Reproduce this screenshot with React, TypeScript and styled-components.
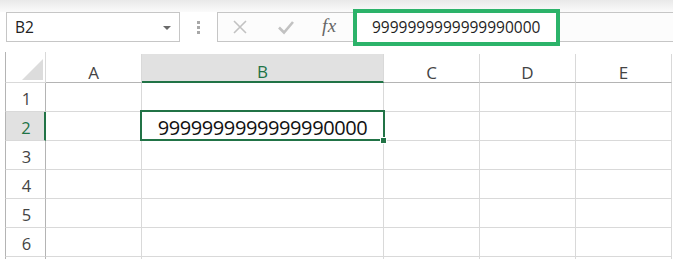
import React from 'react';
import styled, { createGlobalStyle } from 'styled-components';

const GlobalStyle = createGlobalStyle`
  html, body {
    margin: 0;
    padding: 0;
    background: #ffffff;
  }
  body {
    font-family: 'Open Sans', 'Noto Sans', sans-serif;
    color: #222;
  }
`;

const GREEN = '#217346';
const GRID = '#d9d9d9';
const HEADER_EDGE = '#b4b4b4';

const Page = styled.div`
  width: 673px;
  height: 259px;
  overflow: hidden;
  background: #fff;
`;

const TopBand = styled.div`
  height: 12px;
  background: linear-gradient(#e9e9e9, #fbfbfb);
`;

const Toolbar = styled.div`
  display: flex;
  align-items: stretch;
  height: 30px;
  padding-left: 6px;
`;

const NameBox = styled.div`
  box-sizing: border-box;
  width: 174px;
  display: flex;
  align-items: center;
  justify-content: space-between;
  padding: 0 8px 0 8px;
  border: 1px solid #c6c6c6;
  background: #fff;
  font-size: 15.5px;
  color: #222;
`;

const Caret = styled.span`
  width: 0;
  height: 0;
  border-left: 4px solid transparent;
  border-right: 4px solid transparent;
  border-top: 4px solid #6a6a6a;
  margin-top: 2px;
`;

const Grip = styled.div`
  width: 37px;
  display: flex;
  flex-direction: column;
  align-items: center;
  justify-content: center;
  gap: 2px;
  padding-top: 1px;

  span {
    width: 3px;
    height: 3px;
    background: #a8a8a8;
  }
`;

const FormulaBar = styled.div`
  flex: 1;
  display: flex;
  align-items: center;
  box-sizing: border-box;
  border: 1px solid #c6c6c6;
  border-right: none;
  background: #fcfcfc;
`;

const Buttons = styled.div`
  box-sizing: border-box;
  width: 135px;
  flex: none;
  display: flex;
  align-items: center;
  padding-left: 14px;
`;

const IconSlot = styled.div<{ $w: number }>`
  width: ${(p) => p.$w}px;
  display: flex;
  align-items: center;
  justify-content: flex-start;
`;

const Fx = styled.span`
  font-family: 'Liberation Serif', 'DejaVu Serif', serif;
  font-style: italic;
  font-size: 19px;
  color: #666;
  letter-spacing: 0.5px;
  margin-top: -2px;
`;

const Highlight = styled.div`
  box-sizing: border-box;
  width: 207px;
  height: 37px;
  flex: none;
  display: flex;
  align-items: center;
  padding-left: 15px;
  border: 4px solid #2cb36a;
  background: #fff;
  font-size: 15.5px;
  color: #1e1e1e;
`;

const Sheet = styled.div`
  margin-top: 10px;
  margin-left: 5px;
  display: grid;
  grid-template-columns: 41px 96px 242px 96px 96px 96px;
  grid-auto-rows: 29px;
  grid-template-rows: 31px;
`;

const Corner = styled.div`
  box-sizing: border-box;
  border-left: 1px solid ${HEADER_EDGE};
  border-right: 1px solid ${GRID};
  border-bottom: 1px solid ${GRID};
  display: flex;
  align-items: flex-end;
  justify-content: flex-end;
  padding: 0 2px 2px 0;
`;

const CornerMark = styled.span`
  width: 0;
  height: 0;
  border-left: 21px solid transparent;
  border-bottom: 21px solid #dcdcdc;
`;

const ColHead = styled.div<{ $active?: boolean }>`
  box-sizing: border-box;
  display: flex;
  align-items: center;
  justify-content: center;
  padding-top: 8px;
  font-size: 17px;
  color: ${(p) => (p.$active ? GREEN : '#444')};
  background: ${(p) => (p.$active ? '#e1e1e1' : '#fff')};
  border-right: 1px solid ${GRID};
  border-bottom: ${(p) => (p.$active ? `2px solid ${GREEN}` : `1px solid ${HEADER_EDGE}`)};
  margin-top: 2px;
`;

const RowHead = styled.div<{ $active?: boolean }>`
  box-sizing: border-box;
  display: flex;
  align-items: center;
  justify-content: center;
  padding: 3px 0 0 2px;
  font-size: 16.5px;
  color: ${(p) => (p.$active ? GREEN : '#444')};
  background: ${(p) => (p.$active ? '#e1e1e1' : '#fff')};
  border-left: 1px solid ${HEADER_EDGE};
  border-right: ${(p) => (p.$active ? `2px solid ${GREEN}` : `1px solid ${HEADER_EDGE}`)};
  border-bottom: 1px solid ${GRID};
`;

const Cell = styled.div<{ $active?: boolean }>`
  box-sizing: border-box;
  position: relative;
  display: flex;
  align-items: center;
  justify-content: center;
  padding-top: 2px;
  border-right: 1px solid ${GRID};
  border-bottom: 1px solid ${GRID};
  font-size: 20px;
  letter-spacing: -0.4px;
  color: #111;

  ${(p) =>
    p.$active &&
    `
    &::after {
      content: '';
      position: absolute;
      top: -2px;
      left: -2px;
      right: -2px;
      bottom: -1px;
      border: 2px solid ${GREEN};
      pointer-events: none;
    }
    &::before {
      content: '';
      position: absolute;
      right: -4px;
      bottom: -4px;
      width: 5px;
      height: 5px;
      background: ${GREEN};
      border: 1px solid #fff;
      z-index: 2;
    }
  `}
`;

const columns = ['A', 'B', 'C', 'D', 'E'];
// the 7th row only peeks in at the bottom edge, so its number stays hidden
const rows = [1, 2, 3, 4, 5, 6, 7];
const visibleRows = 6;
const activeCol = 'B';
const activeRow = 2;
const value = '9999999999999990000';

const CancelIcon = () => (
  <svg width="16" height="16" viewBox="0 0 16 16">
    <path d="M2 2 L14 14 M14 2 L2 14" stroke="#c2c2c2" strokeWidth="1.6" fill="none" />
  </svg>
);

const EnterIcon = () => (
  <svg width="18" height="16" viewBox="0 0 18 16">
    <path d="M2 8.5 L7 13.5 L16 3" stroke="#c2c2c2" strokeWidth="2.6" fill="none" />
  </svg>
);

const App: React.FC = () => {
  return (
    <Page>
      <GlobalStyle />
      <TopBand />
      <Toolbar>
        <NameBox>
          <span>B2</span>
          <Caret />
        </NameBox>
        <Grip>
          <span />
          <span />
          <span />
        </Grip>
        <FormulaBar>
          <Buttons>
            <IconSlot $w={45}>
              <CancelIcon />
            </IconSlot>
            <IconSlot $w={45}>
              <EnterIcon />
            </IconSlot>
            <IconSlot $w={30}>
              <Fx>fx</Fx>
            </IconSlot>
          </Buttons>
          <Highlight>{value}</Highlight>
        </FormulaBar>
      </Toolbar>

      <Sheet>
        <Corner>
          <CornerMark />
        </Corner>
        {columns.map((c) => (
          <ColHead key={c} $active={c === activeCol}>
            {c}
          </ColHead>
        ))}
        {rows.map((r) => (
          <React.Fragment key={r}>
            <RowHead $active={r === activeRow}>{r <= visibleRows ? r : null}</RowHead>
            {columns.map((c) => {
              const active = r === activeRow && c === activeCol;
              return (
                <Cell key={c} $active={active}>
                  {active ? value : null}
                </Cell>
              );
            })}
          </React.Fragment>
        ))}
      </Sheet>
    </Page>
  );
};

export default App;
